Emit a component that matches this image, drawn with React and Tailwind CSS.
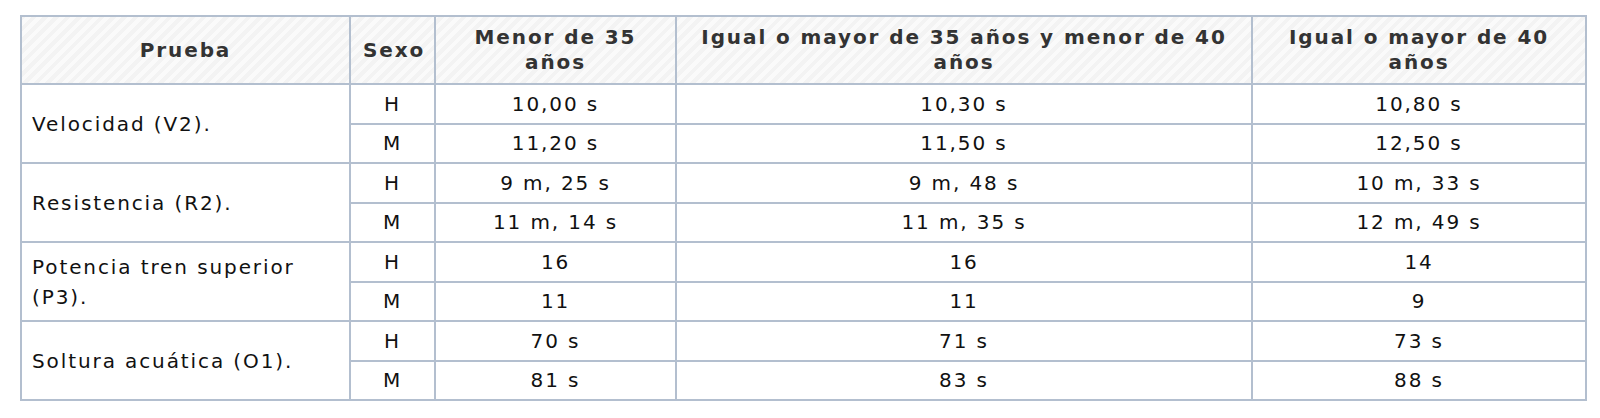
const rows = [
  {
    prueba: "Velocidad (V2).",
    h: ["10,00 s", "10,30 s", "10,80 s"],
    m: ["11,20 s", "11,50 s", "12,50 s"],
  },
  {
    prueba: "Resistencia (R2).",
    h: ["9 m, 25 s", "9 m, 48 s", "10 m, 33 s"],
    m: ["11 m, 14 s", "11 m, 35 s", "12 m, 49 s"],
  },
  {
    prueba: "Potencia tren superior (P3).",
    h: ["16", "16", "14"],
    m: ["11", "11", "9"],
  },
  {
    prueba: "Soltura acuática (O1).",
    h: ["70 s", "71 s", "73 s"],
    m: ["81 s", "83 s", "88 s"],
  },
];

const th =
  "border-2 border-[#b3bfcf] px-3 text-center align-middle font-bold text-[#333] leading-[25px]";
const td = "border-2 border-[#b3bfcf] h-[39.5px] p-0 text-center align-middle leading-[24px]";

function App() {
  return (
    <div className="min-h-screen bg-white pt-[15px] px-[20px] font-['DejaVu_Sans',Verdana,sans-serif] text-[20px] tracking-[1.9px] text-[#111]">
      <table className="w-[1565px] table-fixed border-collapse bg-white">
        <colgroup>
          <col className="w-[329px]" />
          <col className="w-[85px]" />
          <col className="w-[241px]" />
          <col className="w-[576px]" />
          <col className="w-[334px]" />
        </colgroup>
        <thead>
          <tr className="h-[68px] bg-[#f6f6f6] bg-[repeating-linear-gradient(135deg,#f3f3f3_0px,#f3f3f3_4px,#fafafa_4px,#fafafa_8px)]">
            <th className={th}>Prueba</th>
            <th className={th}>Sexo</th>
            <th className={th}>Menor de 35 años</th>
            <th className={th}>Igual o mayor de 35 años y menor de 40 años</th>
            <th className={th}>Igual o mayor de 40 años</th>
          </tr>
        </thead>
        <tbody>
          {rows.map((r) => (
            <>
              <tr key={r.prueba + "h"}>
                <td
                  rowSpan={2}
                  className="border-2 border-[#b3bfcf] pl-[10px] pr-3 text-left align-middle leading-[30px]"
                >
                  {r.prueba}
                </td>
                <td className={td}>H</td>
                {r.h.map((v, i) => (
                  <td key={i} className={td}>
                    {v}
                  </td>
                ))}
              </tr>
              <tr key={r.prueba + "m"}>
                <td className={td}>M</td>
                {r.m.map((v, i) => (
                  <td key={i} className={td}>
                    {v}
                  </td>
                ))}
              </tr>
            </>
          ))}
        </tbody>
      </table>
    </div>
  );
}

export default App;
